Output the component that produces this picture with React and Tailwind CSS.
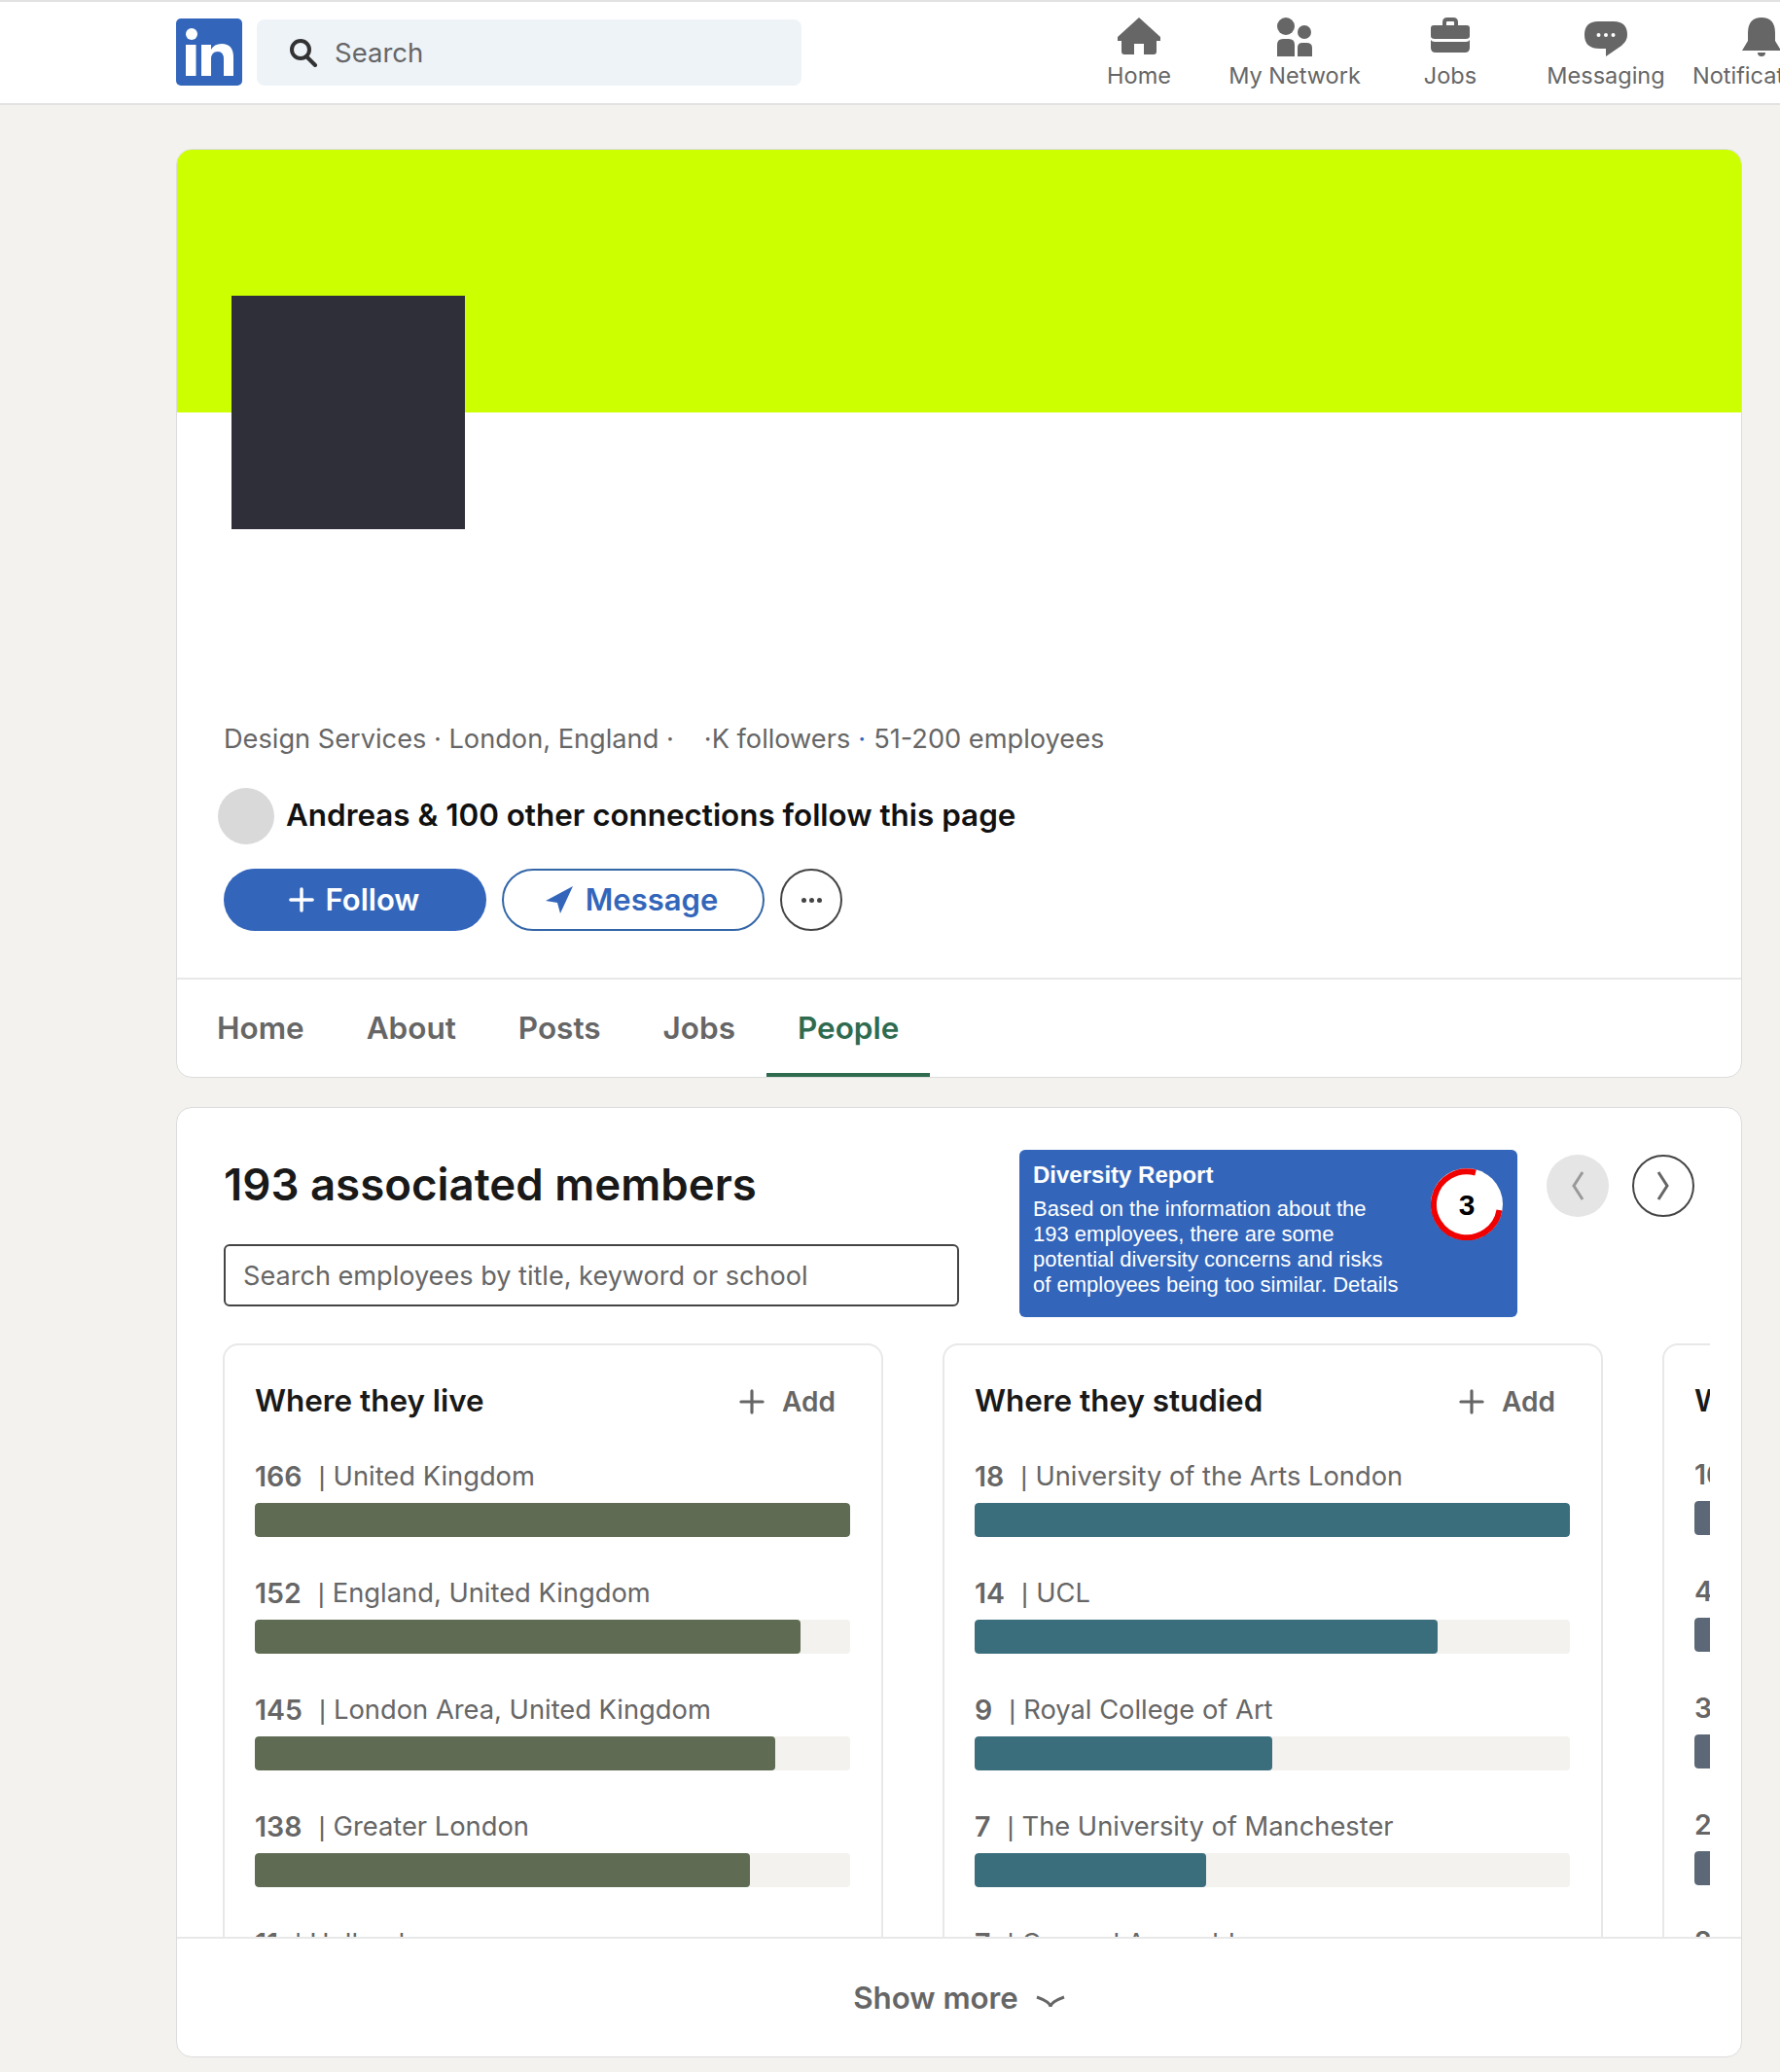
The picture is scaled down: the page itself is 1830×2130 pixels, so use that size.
import { Plus } from 'lucide-react';

const navItems = [
  { label: 'Home', icon: <HomeIcon /> },
  { label: 'My Network', icon: <NetworkIcon /> },
  { label: 'Jobs', icon: <JobsIcon /> },
  { label: 'Messaging', icon: <MessagingIcon /> },
];

const tabs = ['Home', 'About', 'Posts', 'Jobs', 'People'];

const columns = [
  {
    title: 'Where they live',
    bar: 'bg-[#5f6b52]',
    rowsClass: 'mt-[42px]',
    rows: [
      { n: 166, label: 'United Kingdom', pct: 100 },
      { n: 152, label: 'England, United Kingdom', pct: 91.6 },
      { n: 145, label: 'London Area, United Kingdom', pct: 87.4 },
      { n: 138, label: 'Greater London', pct: 83.2 },
      { n: 11, label: 'Holland', pct: 10 },
    ],
  },
  {
    title: 'Where they studied',
    bar: 'bg-[#3b6e7d]',
    rowsClass: 'mt-[42px]',
    rows: [
      { n: 18, label: 'University of the Arts London', pct: 100 },
      { n: 14, label: 'UCL', pct: 77.8 },
      { n: 9, label: 'Royal College of Art', pct: 50 },
      { n: 7, label: 'The University of Manchester', pct: 38.9 },
      { n: 7, label: 'General Assembly', pct: 38.9 },
    ],
  },
  {
    title: 'What they do',
    bar: 'bg-[#5c6878]',
    rowsClass: 'mt-[40px]',
    rows: [
      { n: 16, label: 'Design', pct: 100 },
      { n: 4, label: 'Marketing', pct: 60 },
      { n: 3, label: 'Media', pct: 40 },
      { n: 2, label: 'Sales', pct: 30 },
      { n: 2, label: 'Research', pct: 30 },
    ],
  },
];

function HomeIcon() {
  return (
    <svg width="44" height="38" viewBox="0 0 44 38" fill="#666">
      <path d="M22 0 L44 20 V24 H40 V35 Q40 38 37 38 H27 V27 H17 V38 H7 Q4 38 4 35 V24 H0 V20 Z" />
    </svg>
  );
}

function NetworkIcon() {
  return (
    <svg width="36" height="40" viewBox="0 0 36 40" fill="#666">
      <ellipse cx="9" cy="9" rx="9" ry="9" />
      <ellipse cx="28" cy="15" rx="7" ry="7" />
      <path d="M0 40 V28 Q0 22 6 22 H12 Q18 22 18 28 V40 Z" />
      <path d="M21 40 V31 Q21 26 26 26 H30 Q36 26 36 31 V40 Z" />
    </svg>
  );
}

function JobsIcon() {
  return (
    <svg width="40" height="36" viewBox="0 0 40 36" fill="#666">
      <path d="M12 8 V5 Q12 0 17 0 H23 Q28 0 28 5 V8 H24 V5 Q24 4 23 4 H17 Q16 4 16 5 V8 Z" />
      <path d="M0 11 Q0 8 3 8 H37 Q40 8 40 11 V19 Q40 22 36 22 H4 Q0 22 0 19 Z" />
      <path d="M0 23 Q1 25 4 25 H36 Q39 25 40 23 V31 Q40 36 35 36 H5 Q0 36 0 31 Z" />
    </svg>
  );
}

function MessagingIcon() {
  return (
    <svg className="mt-[4px]" width="44" height="36" viewBox="0 0 44 36">
      <path fill="#666" d="M14 0 H30 Q44 0 44 14 Q44 20 38 25 L22 36 V28 H16 Q0 28 0 14 Q0 0 14 0 Z" />
      <circle cx="14.5" cy="14" r="2" fill="#fff" />
      <circle cx="22" cy="14" r="2" fill="#fff" />
      <circle cx="29.5" cy="14" r="2" fill="#fff" />
    </svg>
  );
}

function BellIcon() {
  return (
    <svg width="40" height="40" viewBox="0 0 40 40" fill="#666">
      <path d="M20 0 Q34 0 34 16 V24 L40 34 H0 L6 24 V16 Q6 0 20 0 Z" />
      <path d="M16 36 H24 Q24 40 20 40 Q16 40 16 36 Z" />
    </svg>
  );
}

function LinkedInLogo() {
  return (
    <div className="w-[68px] h-[69px] rounded-[5px] bg-[#3366bb] shrink-0 flex justify-center">
      <svg width="68" height="69" viewBox="0 0 68 69" fill="#fff">
        <circle cx="16" cy="16" r="6" />
        <rect x="10" y="27" width="10.5" height="32" />
        <path d="M26 27 H36 V32 Q39 26 47 26 Q59 26 59 40 V59 H49 V42 Q49 34 43 34 Q36 34 36 42 V59 H26 Z" />
      </svg>
    </div>
  );
}

function Row({ n, label, pct, bar }) {
  return (
    <div className="mb-[41px]">
      <div className="h-[34px] flex items-center text-[27.3px] text-[#666] whitespace-nowrap">
        <span className="text-[28.5px] font-semibold">{n}</span>
        <span className="ml-[17px] font-['Liberation_Sans',sans-serif]">|</span>
        <span className="ml-[8px]">{label}</span>
      </div>
      <div className="mt-[10px] h-[35px] rounded-[4px] bg-[#f3f2ef] overflow-hidden">
        <div className={`h-full rounded-[4px] ${bar}`} style={{ width: `${pct}%` }} />
      </div>
    </div>
  );
}

function InsightCard({ title, bar, rows, rowsClass }) {
  return (
    <div className="w-[679px] shrink-0 h-[700px] border-2 border-[#e8e8e8] rounded-[16px] pl-[31px] pr-[32px] pt-[40px] bg-white">
      <div className="h-[36px] flex items-center justify-between pr-[15px]">
        <h3 className="text-[31.4px] font-semibold text-[#191919] whitespace-nowrap">{title}</h3>
        <div className="flex items-center gap-[12px] text-[28px] font-semibold text-[#666]">
          <Plus size={38} strokeWidth={2} />
          Add
        </div>
      </div>
      <div className={rowsClass}>
        {rows.map(r => <Row key={r.label} {...r} bar={bar} />)}
      </div>
    </div>
  );
}

export default function App() {
  return (
    <div className="w-[1830px] h-[2130px] overflow-hidden bg-[#f3f2ef] font-['Inter',sans-serif]">
      {/* Top nav */}
      <header className="h-[108px] bg-white border-t-2 border-b-2 border-[#e2e2e2] flex pl-[181px]">
        <div className="flex items-start gap-[15px] pt-[17px]">
          <LinkedInLogo />
          <div className="w-[560px] h-[68px] bg-[#eef3f8] rounded-[8px] flex items-center pl-[33px] gap-[17px] mt-[1px]">
            <svg width="30" height="30" viewBox="0 0 30 30" fill="none" stroke="#333" strokeWidth="4" strokeLinecap="round">
              <circle cx="12" cy="12" r="9" />
              <path d="M18 19 L27 28" />
            </svg>
            <span className="mt-[2px] text-[27.5px] text-[#666]">Search</span>
          </div>
        </div>
        <nav className="ml-[267px] flex shrink-0">
          {navItems.map(item => (
            <div key={item.label} className="w-[160px] shrink-0 flex flex-col items-center">
              <div className="h-[56px] pt-[16px] flex items-start">{item.icon}</div>
              <span className="mt-[4px] text-[23.5px] leading-[32px] text-[#666] whitespace-nowrap">{item.label}</span>
            </div>
          ))}
          <div className="shrink-0 ml-[9px] flex flex-col">
            <div className="h-[56px] pl-[51px] pt-[16px] flex items-start"><BellIcon /></div>
            <span className="mt-[4px] text-[23.5px] leading-[32px] text-[#666] whitespace-nowrap">Notifications</span>
          </div>
        </nav>
      </header>

      <main className="w-[1610px] ml-[181px] mt-[45px]">
        {/* Company card */}
        <section className="h-[955px] bg-white border border-[#dcdcdc] rounded-[16px] overflow-hidden">
          <div className="h-[270px] bg-[#ccff00]" />
          <div className="w-[240px] h-[240px] bg-[#2e2f38] ml-[56px] -mt-[120px] relative" />
          <div className="mt-[196px] pl-[48px] h-[40px] flex items-center text-[27.2px] text-[#666] whitespace-nowrap">
            Design Services · London, England ·
            <span className="ml-[31px]">·K followers</span>
            <span className="mx-[8px] text-[#3366bb]">·</span>
            51-200 employees
          </div>
          <div className="mt-[30px] pl-[42px] flex items-center gap-[12px]">
            <div className="w-[58px] h-[58px] rounded-full bg-[#d9d9d9]" />
            <span className="text-[31.4px] font-semibold text-[#111]">Andreas &amp; 100 other connections follow this page</span>
          </div>
          <div className="mt-[25px] pl-[48px] flex items-center gap-[16px]">
            <button className="w-[270px] h-[64px] rounded-full bg-[#3366bb] text-white text-[31px] font-semibold flex items-center justify-center gap-[6px] pr-[8px]">
              <Plus size={38} strokeWidth={2.2} />
              Follow
            </button>
            <button className="w-[270px] h-[64px] rounded-full border-2 border-[#3366a8] text-[#3366bb] text-[31px] font-semibold flex items-center justify-center gap-[13px] pr-[3px]">
              <svg width="28" height="28" viewBox="0 0 28 28" fill="#3366bb"><path d="M28 0 L0 15 L12 17 L15 28 Z" /></svg>
              Message
            </button>
            <button className="w-[64px] h-[64px] rounded-full border-2 border-[#444] flex items-center justify-center gap-[3px]">
              <span className="w-[5px] h-[5px] rounded-full bg-[#444]" />
              <span className="w-[5px] h-[5px] rounded-full bg-[#444]" />
              <span className="w-[5px] h-[5px] rounded-full bg-[#444]" />
            </button>
          </div>
          <div className="mt-[48px] border-t-2 border-[#e8e8e8] h-[102px] pl-[9px] flex">
            {tabs.map(t => (
              <div key={t} className={`px-[32px] h-[100px] pt-[4px] flex items-center text-[31.5px] font-semibold border-b-4 ${t === 'People' ? 'text-[#2f6b4f] border-[#2f6b4f]' : 'text-[#666] border-transparent'}`}>
                {t}
              </div>
            ))}
          </div>
        </section>

        {/* Members card */}
        <section className="mt-[30px] h-[977px] bg-white border border-[#dcdcdc] rounded-[16px] overflow-hidden">
          <div className="flex pl-[48px] pt-[43px] h-[242px]">
            <div className="w-[756px]">
              <h2 className="text-[45.6px] leading-[72px] font-semibold text-[#191919] whitespace-nowrap">193 associated members</h2>
              <div className="mt-[25px] h-[64px] border-2 border-[#444] rounded-[6px] flex items-center pl-[18px] pt-[2px] text-[27.1px] text-[#666]">
                Search employees by title, keyword or school
              </div>
            </div>
            <div className="ml-[62px] w-[512px] h-[172px] bg-[#3366bb] rounded-[6px] text-white font-['Liberation_Sans',sans-serif] pl-[14px] pt-[12px] relative">
              <div className="text-[24px] leading-[28px] font-bold">Diversity Report</div>
              <p className="mt-[8px] text-[22px] leading-[26px] whitespace-pre-line">
                {'Based on the information about the\n193 employees, there are some\npotential diversity concerns and risks\nof employees being too similar. Details'}
              </p>
              <div className="absolute left-[423px] top-[19px] w-[74px] h-[74px] rounded-full bg-white flex items-center justify-center pt-[1px] text-[30px] font-bold text-black">
                <svg className="absolute inset-0" width="74" height="74" viewBox="0 0 74 74" fill="none">
                  <path d="M46 4.5 A34 34 0 1 0 70.5 43" stroke="#f00000" strokeWidth="6" />
                </svg>
                3
              </div>
            </div>
            <div className="ml-[30px] mt-[5px] flex gap-[24px]">
              <div className="w-[64px] h-[64px] rounded-full bg-[#e5e5e5] flex items-center justify-center">
                <svg width="16" height="32" viewBox="0 0 16 32" fill="none" stroke="#999" strokeWidth="3"><path d="M13 2 L4 16 L13 30" /></svg>
              </div>
              <div className="w-[64px] h-[64px] rounded-full border-2 border-[#444] flex items-center justify-center">
                <svg width="16" height="32" viewBox="0 0 16 32" fill="none" stroke="#666" strokeWidth="3"><path d="M3 2 L12 16 L3 30" /></svg>
              </div>
            </div>
          </div>

          <div className="ml-[47px] w-[1529px] h-[610px] overflow-hidden flex gap-[61px]">
            {columns.map(col => <InsightCard key={col.title} {...col} />)}
          </div>

          <div className="border-t-2 border-[#e8e8e8] h-[123px] pt-[2px] flex items-center justify-center gap-[18px] text-[31.3px] font-semibold text-[#666]">
            Show more
            <svg className="mt-[6px]" width="30" height="15" viewBox="0 0 30 15" fill="none" stroke="#666" strokeWidth="3"><path d="M1 3 Q15 8 15 13 Q15 8 29 3" /></svg>
          </div>
        </section>
      </main>
    </div>
  );
}
